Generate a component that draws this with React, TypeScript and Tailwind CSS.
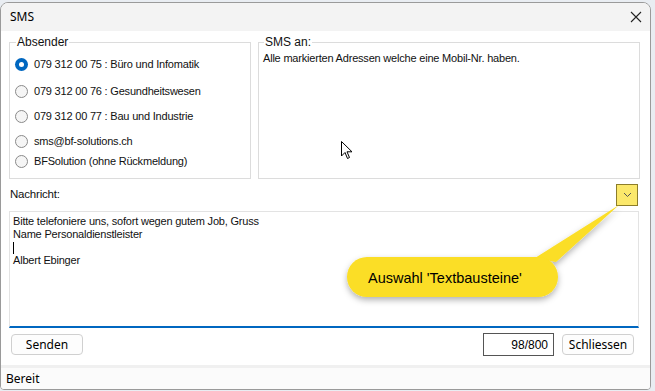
import React from 'react';

const senders = [
  { label: '079 312 00 75 : Büro und Infomatik', checked: true, gap: 'mt-[8px]' },
  { label: '079 312 00 76 : Gesundheitswesen', gap: 'mt-[12px]' },
  { label: '079 312 00 77 : Bau und Industrie', gap: 'mt-[10px]' },
  { label: 'sms@bf-solutions.ch', gap: 'mt-[10px]' },
  { label: 'BFSolution (ohne Rückmeldung)', gap: 'mt-[5px]' },
];

function Radio({ checked }: { checked?: boolean }) {
  if (checked) {
    return (
      <span className="flex h-[13px] w-[13px] items-center justify-center rounded-full bg-[#0067c0]">
        <span className="h-[5px] w-[5px] rounded-full bg-white" />
      </span>
    );
  }
  return <span className="h-[13px] w-[13px] rounded-full border border-[#8a8a8a] bg-[#f5f5f5]" />;
}

export default function App() {
  return (
    <div className="relative h-[391px] w-[655px] overflow-hidden bg-[#e9edf2] font-['Liberation_Sans',Arial,sans-serif] text-[11px] tracking-[-0.2px] text-[#111]">
      {/* window */}
      <div className="mt-[2px] flex h-[388px] w-[651px] flex-col overflow-hidden rounded-t-[8px] rounded-b-[4px] border border-[#9a9a9a] bg-white">
        {/* title bar */}
        <div className="flex h-[28px] shrink-0 items-center justify-between bg-[#f3f3f3] pl-[9px] pr-[7px] font-['Noto_Sans',sans-serif] text-[12px] tracking-normal text-black">
          <span>SMS</span>
          <svg width="12" height="12" viewBox="0 0 12 12" className="mr-[1px]">
            <path d="M1 1 L11 11 M11 1 L1 11" stroke="#222" strokeWidth="1.1" />
          </svg>
        </div>

        <div className="flex flex-1 flex-col px-[8px] pt-[5px]">
          {/* group boxes */}
          <div className="flex gap-[7px]">
            <fieldset className="h-[143px] w-[242px] border border-[#dcdcdc] pl-[5px]">
              <legend className="ml-[1px] px-[1px] text-[12px] leading-[13px] tracking-normal">Absender</legend>
              <div className="flex flex-col">
                {senders.map((s) => (
                  <div key={s.label} className={`flex items-center gap-[6px] ${s.gap}`}>
                    <Radio checked={s.checked} />
                    <span className="leading-[15px]">{s.label}</span>
                  </div>
                ))}
              </div>
            </fieldset>
            <fieldset className="h-[143px] w-[382px] border border-[#dcdcdc] pl-[4px]">
              <legend className="ml-[1px] px-[1px] text-[12px] leading-[13px] tracking-normal">SMS an:</legend>
              <div className="mt-[2px] leading-[15px]">Alle markierten Adressen welche eine Mobil-Nr. haben.</div>
            </fieldset>
          </div>

          {/* Nachricht row */}
          <div className="mt-[4px] flex h-[23px] items-center justify-between pr-[4px]">
            <span className="pl-[1px] pt-[1px] text-[11.5px]">Nachricht:</span>
            <span className="flex h-[22px] w-[22px] items-center justify-center border border-[#8c7d2a] bg-[#fbe86b]">
              <svg width="9" height="6" viewBox="0 0 9 6">
                <path d="M1 1 L4.5 4.5 L8 1" fill="none" stroke="#555" strokeWidth="1" />
              </svg>
            </span>
          </div>

          {/* text area */}
          <div className="mt-[5px] h-[117px] w-[630px] border border-b-2 border-[#e3e3e3] border-b-[#0067c0] px-[3px] pt-[3px] leading-[13px]">
            <div>Bitte telefoniere uns, sofort wegen gutem Job, Gruss</div>
            <div>Name Personaldienstleister</div>
            <div className="h-[13px]">
              <span className="mt-[1px] inline-block h-[12px] w-[1px] bg-black align-top" />
            </div>
            <div>Albert Ebinger</div>
          </div>

          {/* buttons */}
          <div className="mt-[5px] flex items-center font-['Noto_Sans',sans-serif] text-[12px] tracking-normal text-black">
            <button className="ml-[2px] h-[21px] w-[72px] rounded-[4px] border border-[#d0d0d0] bg-[#fdfdfd]">Senden</button>
            <div className="ml-auto flex h-[23px] w-[71px] items-center justify-end border border-[#555] pr-[5px] font-['Liberation_Sans',Arial,sans-serif] text-[12px]">
              98/800
            </div>
            <button className="ml-[8px] mr-[8px] h-[21px] w-[72px] rounded-[4px] border border-[#d0d0d0] bg-[#fdfdfd]">
              Schliessen
            </button>
          </div>
        </div>

        {/* status bar */}
        <div className="flex h-[24px] shrink-0 items-center border-t-[3px] border-[#f0f0f0] bg-[#fbfbfb] pl-[5px] font-['Noto_Sans',sans-serif] text-[12px] tracking-normal text-black">
          Bereit
        </div>
      </div>

      {/* callout */}
      <svg className="absolute left-0 top-0" width="655" height="391" viewBox="0 0 655 391">
        <defs>
          <filter id="sh" x="-20%" y="-20%" width="140%" height="160%">
            <feDropShadow dx="0" dy="3" stdDeviation="3" floodColor="#000" floodOpacity="0.3" />
          </filter>
        </defs>
        <g filter="url(#sh)">
          <path d="M535 258 L619 205 L556 262 Z" fill="#fbde25" />
          <rect x="347" y="257" width="211" height="40" rx="20" fill="#fbde25" />
        </g>
      </svg>
      <div className="absolute left-[368px] top-[270px] text-[14.5px] leading-[16px] tracking-normal text-black">Auswahl 'Textbausteine'</div>

      {/* mouse cursor */}
      <svg className="absolute left-[341px] top-[141px]" width="12" height="19" viewBox="0 0 12 19">
        <path d="M0.5 0.5 L0.5 15 L4 11.5 L6.5 17.5 L8.5 16.5 L6 10.8 L11 10.8 Z" fill="white" stroke="black" strokeWidth="1" />
      </svg>
    </div>
  );
}
